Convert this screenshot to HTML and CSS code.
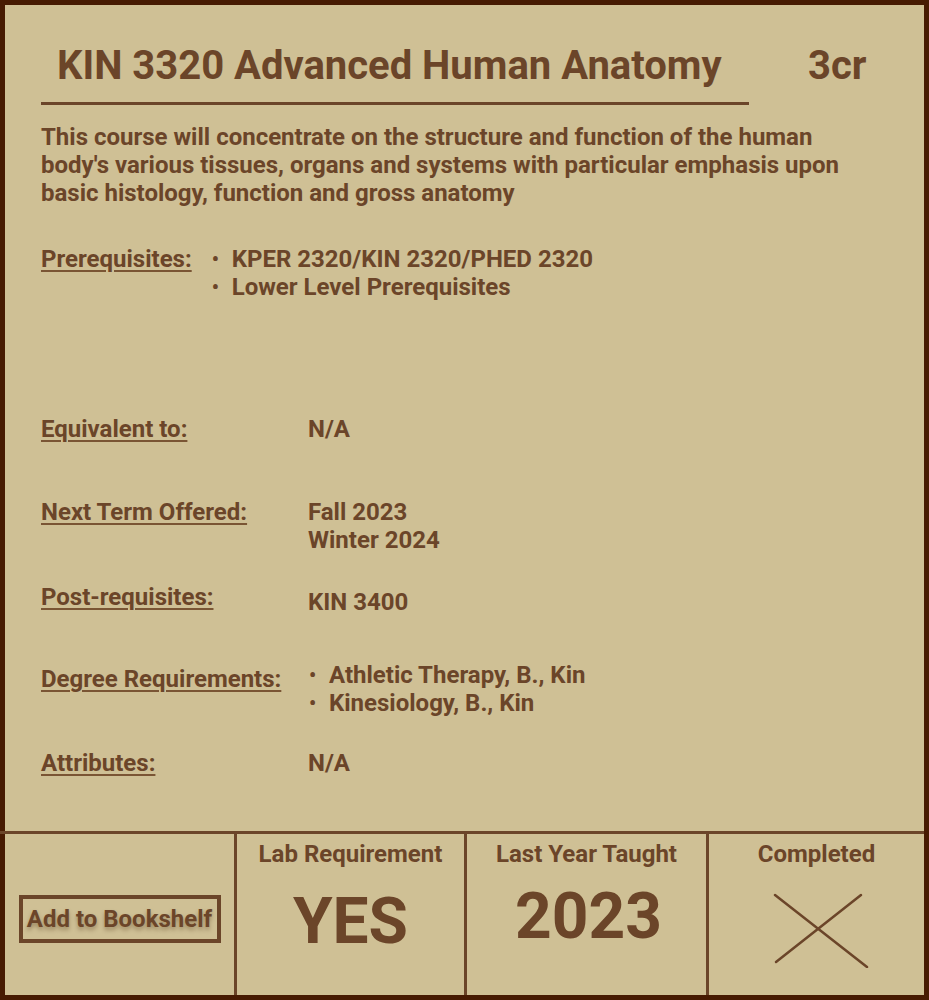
FILE: index.html
```html
<!DOCTYPE html>
<html lang="en">
<head>
<meta charset="utf-8">
<title>KIN 3320 Advanced Human Anatomy</title>
<link rel="stylesheet" href="styles.css">
</head>
<body>
<div class="card">
  <div class="main">
    <div class="header">
      <h1 class="title">KIN 3320 Advanced Human Anatomy</h1>
      <div class="credits">3cr</div>
    </div>
    <p class="desc">This course will concentrate on the structure and function of the human body's various tissues, organs and systems with particular emphasis upon basic histology, function and gross anatomy</p>

    <div class="row row-prereq">
      <span class="label">Prerequisites:</span>
      <ul class="list">
        <li>KPER 2320/KIN 2320/PHED 2320</li>
        <li>Lower Level Prerequisites</li>
      </ul>
    </div>

    <div class="row row-equiv">
      <span class="label col">Equivalent to:</span>
      <div class="value">N/A</div>
    </div>

    <div class="row row-next">
      <span class="label col">Next Term Offered:</span>
      <div class="value">Fall 2023<br>Winter 2024</div>
    </div>

    <div class="row row-post">
      <span class="label col">Post-requisites:</span>
      <div class="value value-low">KIN 3400</div>
    </div>

    <div class="row row-degree">
      <span class="label col label-low">Degree Requirements:</span>
      <ul class="list list-degree">
        <li>Athletic Therapy, B., Kin</li>
        <li>Kinesiology, B., Kin</li>
      </ul>
    </div>

    <div class="row row-attr">
      <span class="label col">Attributes:</span>
      <div class="value">N/A</div>
    </div>
  </div>

  <div class="footer">
    <div class="cell cell-btn">
      <button class="shelf-btn">Add to Bookshelf</button>
    </div>
    <div class="cell">
      <div class="cell-head">Lab Requirement</div>
      <div class="cell-big">YES</div>
    </div>
    <div class="cell">
      <div class="cell-head">Last Year Taught</div>
      <div class="cell-big cell-year">2023</div>
    </div>
    <div class="cell">
      <div class="cell-head">Completed</div>
      <svg class="cross" width="100" height="80" viewBox="0 0 100 80">
        <line x1="6" y1="7" x2="98" y2="79" stroke="#6b4529" stroke-width="2.5" stroke-linecap="round"/>
        <line x1="7" y1="74" x2="92" y2="7" stroke="#6b4529" stroke-width="2.5" stroke-linecap="round"/>
      </svg>
    </div>
  </div>
</div>
</body>
</html>
```

FILE: styles.css
```css
* { box-sizing: border-box; }
html, body { margin: 0; padding: 0; }
body {
  background: #cfc095;
  font-family: Roboto, "Liberation Sans", Arial, sans-serif;
  color: #6b4529;
}
.card {
  width: 929px;
  height: 1000px;
  border: 5px solid #471b02;
  background: #cfc095;
  display: flex;
  flex-direction: column;
}
.main {
  flex: 1;
  padding: 0 0 0 36px;
}
.header {
  display: flex;
  align-items: flex-start;
  padding-top: 38px;
}
.title {
  margin: 0;
  width: 708px;
  padding: 0 0 13px 16px;
  font-size: 40px;
  line-height: 46px;
  font-weight: 700;
  border-bottom: 3px solid #6b4529;
}
.credits {
  margin-left: 59px;
  font-size: 40px;
  line-height: 46px;
  font-weight: 700;
}
.desc {
  margin: 18px 0 0 0;
  width: 820px;
  font-size: 24px;
  line-height: 28px;
  font-weight: 700;
}
.row {
  display: flex;
  font-size: 24px;
  line-height: 28px;
  font-weight: 700;
}
.label {
  text-decoration: underline;
  text-decoration-thickness: 2px;
  text-underline-offset: 3px;
  text-decoration-color: #7a5534;
}
.col { width: 267px; flex: none; }
.list {
  margin: 0;
  padding: 0 0 0 40px;
  list-style: none;
}
.list li { position: relative; }
.list li::before {
  content: "\2022";
  position: absolute;
  left: -20px;
  font-size: 20px;
}
.list-degree { padding-left: 21px; margin-top: -4px; }
.row-prereq { margin-top: 38px; }
.row-equiv { margin-top: 114px; }
.row-next { margin-top: 55px; }
.row-post { margin-top: 29px; }
.value-low { padding-top: 5px; }
.row-degree { margin-top: 49px; }
.row-attr { margin-top: 32px; }

.footer {
  height: 164px;
  border-top: 3px solid #6b4529;
  display: grid;
  grid-template-columns: 229px 230px 242px 1fr;
  margin-left: -5px;
  padding-left: 5px;
}
.cell {
  border-left: 3px solid #6b4529;
  display: flex;
  flex-direction: column;
  align-items: center;
}
.cell-btn {
  border-left: none;
  justify-content: center;
  padding-top: 8px;
}
.shelf-btn {
  background: transparent;
  border: 4px solid #6b4529;
  width: 202px;
  height: 48px;
  padding: 0;
  font-family: Roboto, "Liberation Sans", Arial, sans-serif;
  font-size: 24px;
  font-weight: 700;
  color: #6b4529;
  text-shadow: 0 3px 4px rgba(60, 30, 0, 0.35);
  white-space: nowrap;
  cursor: pointer;
}
.cell-head {
  margin-top: 6px;
  font-size: 24px;
  line-height: 28px;
  font-weight: 700;
}
.cell-big {
  margin-top: 16px;
  font-size: 64px;
  line-height: 76px;
  font-weight: 700;
}
.cell-year { margin-top: 11px; padding-left: 4px; }
.cross { margin-top: 20px; margin-left: 4px; }
```
